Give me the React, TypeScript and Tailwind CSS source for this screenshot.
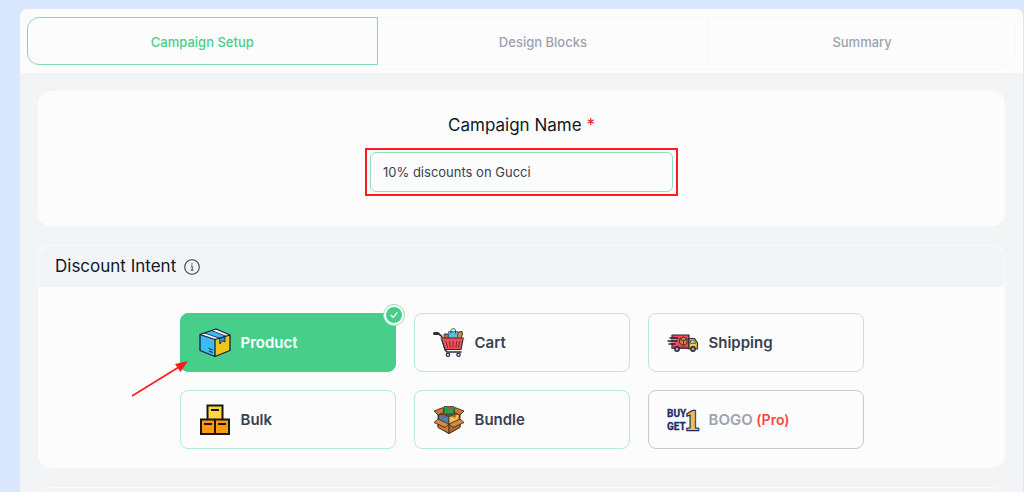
import { useState, type ReactNode } from "react";

function ProductIcon() {
  return (
    <svg viewBox="0 0 32 30" className="h-[30px] w-8" strokeLinejoin="round" strokeLinecap="round" aria-hidden="true">
      <path d="M1 6.5 16 11.5V28.5L1 22.5Z" fill="#3fb8f8" />
      <path d="M16 11.5 31 7V22.5L16 28.5Z" fill="#f0c41b" />
      <path d="M1 6.5 17 1 31 7 16 11.5Z" fill="#3fb8f8" />
      <path d="M1 6.5 5.5 5 20.5 10.2 16 11.5Z M12.5 2.5 17 1 31 7 27 8.2Z" fill="#f6f6f6" />
      <path d="M21 10.2 26 8.7V14L23.7 12.8 21 15.7Z" fill="#2f8fe0" stroke="#172033" strokeWidth=".9" />
      <path d="M5.5 5 20.5 10.2M12.5 2.5 27 8.2" stroke="#172033" strokeWidth=".8" fill="none" />
      <path d="M1 6.5 17 1 31 7V22.5L16 28.5 1 22.5ZM1 6.5 16 11.5 31 7M16 11.5V28.5" stroke="#172033" strokeWidth="1.3" fill="none" />
      <path d="M10 20.5 13.3 21.7M10.5 23.3 13.3 24.3" stroke="#172033" strokeWidth="1" />
    </svg>
  );
}

function CartIcon() {
  return (
    <svg viewBox="0 0 32 30" className="h-[30px] w-8" strokeLinejoin="round" strokeLinecap="round" aria-hidden="true">
      <path d="M11.5 6H17V13H11.5Z" fill="#b8672c" stroke="#202a36" strokeWidth=".9" />
      <path d="M25.5 4 29 3.5 29.5 6 27.5 12H24Z" fill="#d6883c" stroke="#202a36" strokeWidth=".9" />
      <path d="M16 3.5H24.5V12H16Z" fill="#59bedd" stroke="#29647c" strokeWidth=".8" />
      <path d="M18 5V2.3C18 .3 22.5 .3 22.5 2.3V5" fill="none" stroke="#29404c" strokeWidth="1" />
      <path d="M5 5.5 8.5 8 12 21.5 14 24H28" fill="none" stroke="#29323d" strokeWidth="1.6" />
      <path d="M1.5 5.5H5" stroke="#29323d" strokeWidth="3" />
      <path d="M8.5 11H30L28 21.5H12Z" fill="#f2545d" stroke="#202a36" strokeWidth="1.2" />
      <path d="M8.5 11H30.3" stroke="#ed4650" strokeWidth="2" />
      <path d="M8.2 9.9H30.5" stroke="#202a36" strokeWidth=".8" />
      <path d="M13 13.5 14.5 19.5M16.5 13.5 17.3 19.5M20 13.5V19.5M23.5 13.5 23 19.5M26.5 13.5 25.5 19.5" stroke="#74242c" strokeWidth="1" />
      <circle cx="15" cy="26.8" r="1.7" fill="#d5dce3" stroke="#29323d" strokeWidth="1.2" />
      <circle cx="25.5" cy="26.8" r="1.7" fill="#d5dce3" stroke="#29323d" strokeWidth="1.2" />
    </svg>
  );
}

function ShippingIcon() {
  return (
    <svg viewBox="0 0 32 30" className="h-[30px] w-8" strokeLinejoin="round" strokeLinecap="round" aria-hidden="true">
      <path d="M5 7H22V20.5H5Z" fill="#ef4b62" stroke="#252937" strokeWidth="1.2" />
      <path d="M22 10.5H27.5L30.5 15V21H22Z" fill="#f3cb32" stroke="#252937" strokeWidth="1.2" />
      <path d="M24 12.3H27L28.7 15.3H24Z" fill="#b5def2" stroke="#252937" strokeWidth=".7" />
      <path d="M5 18.5H21.5V20.5H5Z" fill="#9a3349" />
      <path d="M13 11 16.5 9 20 11V15.5L16.5 17.5 13 15.5Z" fill="#d8822f" stroke="#252937" strokeWidth=".9" />
      <path d="M13 11 16.5 13 20 11M16.5 13V17.5" stroke="#252937" strokeWidth=".8" fill="none" />
      <path d="M3 10H11M1 13H10M2 16H8" stroke="#252937" strokeWidth="1.4" />
      <path d="M5 11.5H9M3 14.5H7" stroke="#ed9aa6" strokeWidth=".8" />
      <circle cx="10" cy="21" r="2.2" fill="#9fa6b0" stroke="#252937" strokeWidth="1.4" />
      <circle cx="26" cy="21" r="2.2" fill="#9fa6b0" stroke="#252937" strokeWidth="1.4" />
      <path d="M30 18.5V19.5" stroke="#e85542" strokeWidth="1" />
    </svg>
  );
}

function BulkIcon() {
  return (
    <svg viewBox="0 0 32 32" className="size-8" strokeLinejoin="miter" aria-hidden="true">
      <path d="M8.5 1.5H23.500V16H8.500Z" fill="#ffd83b" stroke="#191713" strokeWidth="2" />
      <path d="M2 15.5H16V30H2ZM16 15.5H30V30H16Z" fill="#ff9811" stroke="#191713" strokeWidth="2" />
      <path d="M12 6H20M5 20H13M19 20H27" stroke="#191713" strokeWidth="2" />
    </svg>
  );
}

function BundleIcon() {
  return (
    <svg viewBox="0 0 32 30" className="h-[30px] w-8" strokeLinejoin="round" aria-hidden="true">
      <path d="M5 10 16 4 27 10V22L16 28.5 5 22Z" fill="#7b4220" stroke="#38261d" strokeWidth=".9" />
      <path d="M6 9 15.5 11.5V21L6 16Z" fill="#4186c2" stroke="#27415a" strokeWidth=".8" />
      <path d="M16 12 26 8.5V17L16 21Z" fill="#f0c052" stroke="#66501f" strokeWidth=".8" />
      <path d="M5 10 1 6 10 2.5 11 7.5ZM27 10 31 6 22 2.5 21 7.5Z" fill="#c77b38" stroke="#4c2d1b" strokeWidth=".9" />
      <path d="M11 1.5H21V9H11Z" fill="#27a150" stroke="#245134" strokeWidth=".9" />
      <path d="M14.5 1.5H17.5V5L16 4 14.5 5ZM9.5 9.5H12V13L10.5 12 9.5 13ZM20 10 22.5 9.5V13L21.2 12 20 13Z" fill="#d63b3a" />
      <path d="M5 15.5 16 20V28.5L5 22.5Z" fill="#c77b38" stroke="#4c2d1b" strokeWidth=".9" />
      <path d="M16 20 27 15.5V22.5L16 28.5Z" fill="#b06a31" stroke="#4c2d1b" strokeWidth=".9" />
      <path d="M5 14 16 19 12 22.5 1 17.5ZM27 14 16 19 20 22.5 31 17.5Z" fill="#d38a43" stroke="#4c2d1b" strokeWidth=".9" />
    </svg>
  );
}

function BogoIcon() {
  return (
    <svg viewBox="0 0 32 30" className="h-[30px] w-8 overflow-visible" aria-hidden="true">
      <g fill="#1d2d6b" stroke="#1d2d6b" strokeWidth=".3" className="font-['Roboto',sans-serif] font-bold">
        <text x="0" y="12" fontSize="10">BUY</text>
        <text x="0" y="25" fontSize="10">GET</text>
      </g>
      <text x="18" y="25" fontSize="29" fill="#f4bd48" stroke="#1d2d6b" strokeWidth="2.4" paintOrder="stroke" className="font-['Liberation_Serif',serif] font-bold">1</text>
    </svg>
  );
}

const intents: { name: string; icon: ReactNode; pro?: boolean }[] = [
  { name: "Product", icon: <ProductIcon /> },
  { name: "Cart", icon: <CartIcon /> },
  { name: "Shipping", icon: <ShippingIcon /> },
  { name: "Bulk", icon: <BulkIcon /> },
  { name: "Bundle", icon: <BundleIcon /> },
  { name: "BOGO", icon: <BogoIcon />, pro: true },
];

function IntentCard({ name, icon, pro, selected, onSelect }: { name: string; icon: ReactNode; pro?: boolean; selected: boolean; onSelect: () => void }) {
  const tone = selected
    ? "border-[#48ce8b] bg-[#48ce8b] text-white"
    : pro
      ? "border-[#c5c8ce] text-[#9ca3af]"
      : "border-[#b5ebd0] text-[#374151]";
  return (
    <button
      type="button"
      aria-pressed={selected}
      onClick={onSelect}
      className={`relative flex h-[59px] items-center gap-2.5 rounded-lg border px-[18px] text-[15px] font-semibold ${tone}`}
    >
      {icon}
      <span className="pt-0.5">
        {name}
        {pro && <span className="text-sm text-[#fb4545]"> (Pro)</span>}
      </span>
      {selected && (
        <span className="absolute -top-2.5 -right-2.5 flex size-[22px] items-center justify-center rounded-full border border-[#8fdfb8] bg-white">
          <svg viewBox="0 0 16 16" className="size-4" aria-hidden="true">
            <circle cx="8" cy="8" r="8" fill="#48ce8b" />
            <path d="M5 8.3 7.2 10.4 11 5.8" fill="none" stroke="#fff" strokeWidth="1.2" strokeLinecap="round" strokeLinejoin="round" />
          </svg>
        </span>
      )}
    </button>
  );
}

export default function App() {
  const [selected, setSelected] = useState("Product");
  const [name, setName] = useState("10% discounts on Gucci");
  return (
    <div className="h-screen overflow-hidden bg-[#dae8fe] pt-[9px] pr-px pl-5 font-['Inter',sans-serif]">
      <main className="min-h-screen overflow-hidden rounded-t-lg bg-[#f3f4f6]">
        <nav className="flex bg-[#fcfcfc] px-[7px] py-2 text-[13px] font-medium">
          <button type="button" aria-current="step" className="h-12 flex-[350] rounded-l-xl border border-[#7edcac] pt-1 text-[#48ce8b]">
            Campaign Setup
          </button>
          <button type="button" className="h-12 flex-[332] border-y border-[#f7f8f9] pt-1 text-[#9ca3af]">
            Design Blocks
          </button>
          <button type="button" className="h-12 flex-[307] rounded-r-xl border border-[#f7f8f9] pt-1 text-[#9ca3af]">
            Summary
          </button>
        </nav>

        <div className="flex flex-col gap-[19px] px-[18px] pt-[18px]">
          <section className="flex flex-col items-center rounded-xl bg-[#fcfcfc] pt-5 pb-[30px]">
            <label htmlFor="campaign-name" className="text-[17px] leading-7 text-[#111827]">
              Campaign Name <span className="text-[#e02424]">*</span>
            </label>
            <div className="mt-[9px] border-2 border-[#fb1d1d] px-[3px] py-0.5">
              <input
                id="campaign-name"
                value={name}
                onChange={(e) => setName(e.target.value)}
                className="block h-10 w-[303px] rounded-md border border-[#8ee0b6] bg-[#fcfcfc] px-3 text-[13px] text-[#374151] outline-none"
              />
            </div>
          </section>

          <section className="rounded-xl border border-[#f9fafb] bg-[#fcfcfc]">
            <header className="flex h-[41px] items-center gap-2 rounded-t-xl bg-[#f3f4f6] px-4">
              <h2 className="text-[17px] text-[#111827]">Discount Intent</h2>
              <button type="button" aria-label="About discount intent" className="text-[#374151]">
                <svg viewBox="0 0 16 16" className="size-4" fill="none" stroke="currentColor" aria-hidden="true">
                  <circle cx="8" cy="8" r="7.3" strokeWidth="1.1" />
                  <path d="M7 7H8.2V11M6.7 11.2H9.5" strokeWidth="1" />
                  <circle cx="8" cy="4.9" r=".7" fill="currentColor" stroke="none" />
                </svg>
              </button>
            </header>
            <div className="flex justify-center pt-[26px] pb-[18px]">
              <div className="relative grid w-[684px] grid-cols-3 gap-[18px]">
                {intents.map((intent) => (
                  <IntentCard key={intent.name} {...intent} selected={selected === intent.name} onSelect={() => setSelected(intent.name)} />
                ))}
                <svg viewBox="0 0 58 38" className="pointer-events-none absolute top-[47px] -left-[49px] h-[38px] w-[58px]" aria-hidden="true">
                  <path d="M1 36 48 7" stroke="#fb1d1d" strokeWidth="1.6" />
                  <path d="M57 1 44 4 49.5 12Z" fill="#fb1d1d" />
                </svg>
              </div>
            </div>
          </section>

          <section className="h-20 rounded-xl border border-[#fcfcfc]" />
        </div>
      </main>
    </div>
  );
}
